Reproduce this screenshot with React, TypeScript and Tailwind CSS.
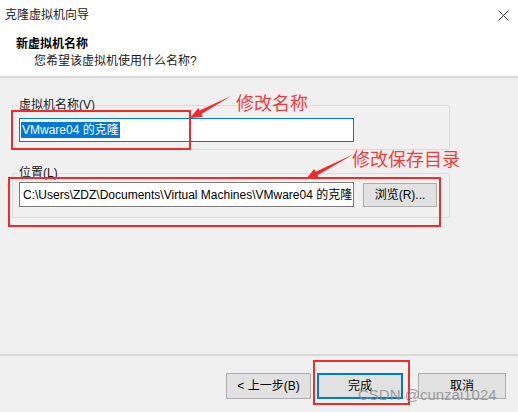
import React from "react";

const ui = "font-['Liberation_Sans','Noto_Sans_CJK_SC',sans-serif]";

function GroupBox({label, top, children}: {label: string; top: string; children: React.ReactNode}) {
	return (
		<div className={`relative border border-[#dcdcdc] rounded-[2px] px-[6px] ${top}`}>
			<span className="absolute -top-[9px] left-[5px] bg-[#f0f0f0] px-[1px] text-[12px] leading-[16px] text-[#1a1a1a]">
				{label}
			</span>
			{children}
		</div>
	);
}

function WizardButton({children, primary}: {children: React.ReactNode; primary?: boolean}) {
	return (
		<button
			className={`w-full h-[26px] text-[12px] text-black bg-[#e1e1e1] whitespace-nowrap ${primary ? "border-2 border-[#0078d7]" : "border border-[#adadad]"}`}
		>
			{children}
		</button>
	);
}

export default function App() {
	return (
		<div className={`relative w-[518px] h-[412px] overflow-hidden bg-[#f0f0f0] flex flex-col ${ui}`}>
			{/* header */}
			<div className="h-[78px] bg-white border-b-2 border-[#dadada] flex flex-col">
				<div className="h-[30px] flex items-center justify-between pl-[5px] pr-[9px]">
					<span className="text-[12px] text-[#1a1a1a]">克隆虚拟机向导</span>
					<svg width="11" height="11" viewBox="0 0 11 11">
						<path d="M0.5 0.5L10.5 10.5M10.5 0.5L0.5 10.5" stroke="#333" strokeWidth="1" />
					</svg>
				</div>
				<div className="pl-[16px] mt-[6px] text-[12px] leading-[16px] font-bold text-black">新虚拟机名称</div>
				<div className="pl-[34px] mt-[1px] text-[12px] leading-[16px] text-[#1a1a1a]">您希望该虚拟机使用什么名称?</div>
			</div>

			{/* body */}
			<div className="flex-1 flex flex-col pl-[12px] pr-[68px] pt-[27px]">
				<GroupBox label="虚拟机名称(V)" top="pt-[12px] pb-[7px]">
					<div className="w-[335px] h-[24px] bg-white border border-[#0078d7] flex items-center px-[1px]">
						<span className="bg-[#0078d7] text-white text-[12px] leading-[16px] px-[1px]">VMware04 的克隆</span>
					</div>
				</GroupBox>
				<div className="mt-[23px]">
					<GroupBox label="位置(L)" top="pt-[8px] pb-[10px]">
						<div className="flex items-center gap-[9px]">
							<div className="w-[335px] h-[25px] bg-white border border-[#7a7a7a] flex items-center pl-[3px] overflow-hidden whitespace-nowrap">
								<span className="text-[12px] leading-[16px] text-black">
									C:\Users\ZDZ\Documents\Virtual Machines\VMware04 的克隆
								</span>
							</div>
							<button className="w-[74px] h-[24px] bg-[#e1e1e1] border border-[#adadad] text-[12px] text-black">
								浏览(R)...
							</button>
						</div>
					</GroupBox>
				</div>
			</div>

			{/* footer */}
			<div className="h-[58px] border-t-2 border-[#dadada] flex items-start justify-end pt-[17px] pr-[12px]">
				<div className="w-[85px]"><WizardButton>&lt; 上一步(B)</WizardButton></div>
				<div className="ml-[6px] w-[86px]"><WizardButton primary>完成</WizardButton></div>
				<div className="ml-[15px] w-[88px]"><WizardButton>取消</WizardButton></div>
			</div>

			{/* annotations */}
			<svg className="absolute inset-0 pointer-events-none" width="518" height="412">
				<rect x="12" y="111" width="178" height="38" fill="none" stroke="#f02b2b" strokeWidth="2" />
				<rect x="9" y="178" width="431" height="48" fill="none" stroke="#f02b2b" strokeWidth="2" />
				<rect x="314" y="361" width="95" height="43" fill="none" stroke="#f02b2b" strokeWidth="2" />
				<polygon points="231,96 199.7,110.5 198.3,107.9 190,118 203,116.7 201.5,114.1" fill="#f02b2b" />
				<polygon points="354,154 315.7,171.7 314.3,169.1 306,179 318.9,177.9 317.5,175.3" fill="#f02b2b" />
			</svg>
			<div className="absolute left-[236px] top-[92px] text-[18px] leading-[24px] text-[#f03c3c]">修改名称</div>
			<div className="absolute left-[352px] top-[148px] text-[18px] leading-[24px] text-[#f03c3c]">修改保存目录</div>
			<div className="absolute left-[358px] top-[385px] text-[15px] leading-[20px] text-[#8a8a8a] opacity-80">
				CSDN @cunzai1024
			</div>
		</div>
	);
}
